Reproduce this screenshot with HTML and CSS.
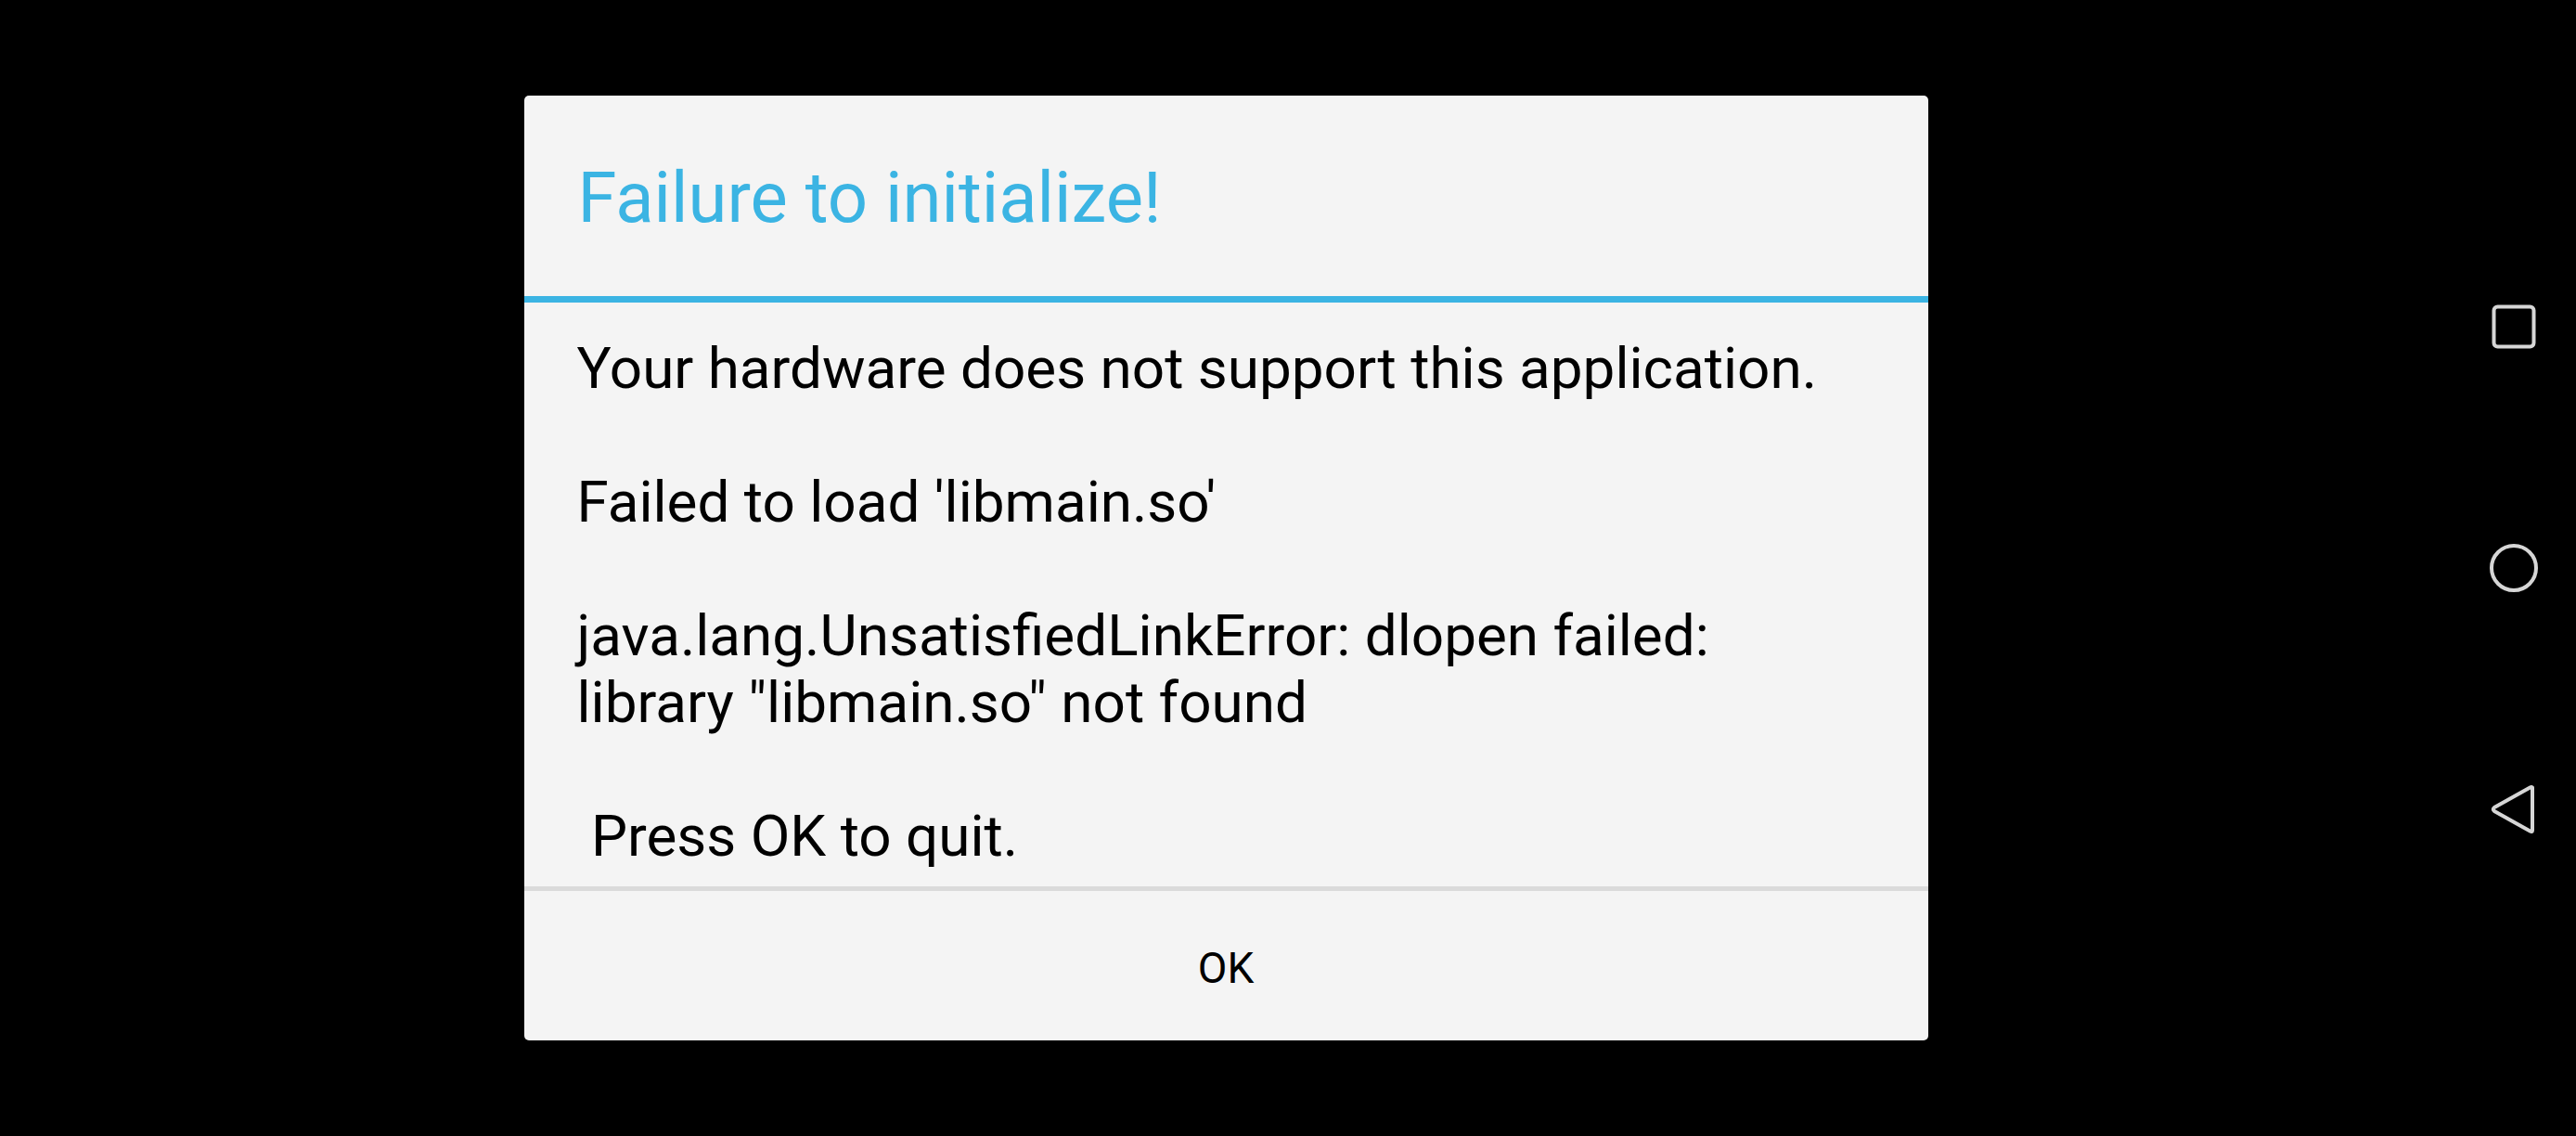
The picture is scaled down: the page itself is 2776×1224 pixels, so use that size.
FILE: index.html
```html
<!DOCTYPE html>
<html lang="en">
<head>
  <meta charset="UTF-8">
  <title>Failure to initialize!</title>
  <link rel="stylesheet" href="styles.css">
</head>
<body>
  <div class="screen">
    <div class="stage">
      <div class="dialog">
        <div class="dialog-title">Failure to initialize!</div>
        <div class="dialog-body">Your hardware does not support this application.

Failed to load 'libmain.so'

java.lang.UnsatisfiedLinkError: dlopen failed:
library "libmain.so" not found

 Press OK to quit.</div>
        <div class="dialog-buttons">
          <button class="btn-ok">OK</button>
        </div>
      </div>
    </div>
    <!-- android nav buttons -->
    <div class="navbar">
      <svg class="nav-icon" width="56" height="56" viewBox="0 0 56 56">
        <rect x="6.5" y="6.5" width="43" height="43" rx="4" fill="none" stroke="#d6d6d6" stroke-width="4"/>
      </svg>
      <svg class="nav-icon" width="56" height="56" viewBox="0 0 56 56">
        <circle cx="28" cy="28" r="24" fill="none" stroke="#d6d6d6" stroke-width="4"/>
      </svg>
      <svg class="nav-icon" width="56" height="56" viewBox="0 0 56 56">
        <path d="M48 4.5 L48 50.5 Q48 53 45.5 51.6 L7 30 Q4.5 28 7 26 L45.5 4.4 Q48 3 48 5.5 Z" fill="none" stroke="#d6d6d6" stroke-width="4" stroke-linejoin="round"/>
      </svg>
    </div>
  </div>
</body>
</html>
```

FILE: styles.css
```css
html, body {
  margin: 0;
  padding: 0;
  background: #000;
}

body {
  font-family: Roboto, "Noto Sans", sans-serif;
}

.screen {
  display: flex;
  width: 2776px;
  height: 1224px;
}

.stage {
  flex: 1;
  display: flex;
  align-items: center;
  justify-content: center;
}

.dialog {
  width: 1513px;
  height: 1018px;
  background: #f4f4f4;
  border-radius: 5px;
  display: flex;
  flex-direction: column;
  overflow: hidden;
}

.dialog-title {
  height: 223px;
  box-sizing: border-box;
  padding: 72px 0 0 58px;
  font-size: 76px;
  line-height: 76px;
  font-weight: 400;
  color: #3bb4e3;
  border-bottom: 7px solid #3bb4e3;
}

.dialog-body {
  flex: 1;
  padding: 35px 57px 0 57px;
  font-size: 62px;
  line-height: 72px;
  color: #000;
  white-space: pre-wrap;
  border-bottom: 5px solid #dadada;
}

.dialog-buttons {
  height: 161px;
  display: flex;
  align-items: center;
  justify-content: center;
}

.btn-ok {
  background: none;
  border: none;
  font-family: Roboto, "Noto Sans", sans-serif;
  font-size: 46px;
  color: #000;
  padding: 0;
  margin-top: 4px;
}

.navbar {
  width: 134px;
  display: flex;
  flex-direction: column;
  align-items: center;
  justify-content: center;
  gap: 204px;
}

.nav-icon {
  display: block;
}
```
